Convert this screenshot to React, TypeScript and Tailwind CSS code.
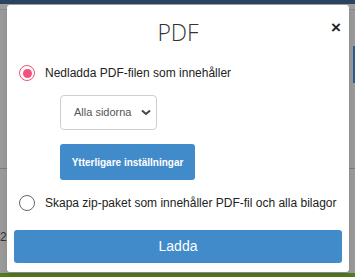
import { useState } from 'react';

export default function App() {
  const [choice, setChoice] = useState<'pdf' | 'zip'>('pdf');

  return (
    <div className="relative w-[355px] h-[277px] overflow-hidden bg-[#999999] font-['Liberation_Sans',Arial,sans-serif]">
      {/* page behind the backdrop */}
      <div className="h-[4px] bg-[#2c4360]" />
      <div className="h-[6px] bg-[#9d9d9d] border-b border-[#8a8a8a]" />
      <div className="mt-[158px] border-t border-[#7d7d7d]" />
      <div className="absolute right-0 top-[46px] w-[2px] h-[37px] bg-[#2a5d8f]" />
      <div className="absolute left-0 top-[228px] text-[12px] text-[#333]">20</div>
      <div className="absolute left-0 bottom-0 w-full h-[4px] bg-[#557a1f]" />

      {/* MODAL */}
      <div className="absolute left-[7px] top-[5px] w-[342px] h-[267px] bg-white rounded-[3px] shadow-md">
        <button className="absolute right-[8px] top-[14px] text-[17px] font-bold leading-none text-[#222]">
          ×
        </button>

        <h1 className="pt-[12px] h-[42px] text-center text-[23px] font-light leading-[30px] text-[#333] font-['Open_Sans',sans-serif]">
          PDF
        </h1>

        <div className="pl-[12px] pr-[8px] mt-[18px]">
          <label className="flex items-center h-[16px] gap-[10px] cursor-pointer" onClick={() => setChoice('pdf')}>
            <span
              className={`w-[16px] h-[16px] rounded-full border flex items-center justify-center ${
                choice === 'pdf' ? 'border-[#f2507c]' : 'border-[#666]'
              }`}
            >
              {choice === 'pdf' && <span className="w-[9px] h-[9px] rounded-full bg-[#f2507c]" />}
            </span>
            <span className="text-[12px] text-[#222]">Nedladda PDF-filen som innehåller</span>
          </label>

          <div className="pl-[41px] mt-[14px]">
            <div className="w-[97px] h-[35px] border border-[#cfcfcf] rounded-[4px] flex items-center justify-between pl-[13px] pr-[5px]">
              <span className="text-[11px] text-[#555]">Alla sidorna</span>
              <svg width="10" height="7" viewBox="0 0 10 7">
                <path d="M1 1.5 L5 5 L9 1.5" fill="none" stroke="#444" strokeWidth="2" />
              </svg>
            </div>

            <button className="mt-[14px] w-[135px] h-[36px] rounded-[3px] bg-[#428bca] text-white text-[10px] font-bold">
              Ytterligare inställningar
            </button>
          </div>

          <label className="mt-[15px] flex items-center h-[16px] gap-[10px] cursor-pointer" onClick={() => setChoice('zip')}>
            <span
              className={`w-[16px] h-[16px] rounded-full border flex items-center justify-center ${
                choice === 'zip' ? 'border-[#f2507c]' : 'border-[#666]'
              }`}
            >
              {choice === 'zip' && <span className="w-[9px] h-[9px] rounded-full bg-[#f2507c]" />}
            </span>
            <span className="text-[12px] text-[#222]">Skapa zip-paket som innehåller PDF-fil och alla bilagor</span>
          </label>
        </div>

        <div className="px-[7px] mt-[19px]">
          <button className="w-full h-[33px] rounded-[3px] bg-[#428bca] text-white text-[14px]">Ladda</button>
        </div>
      </div>
    </div>
  );
}
